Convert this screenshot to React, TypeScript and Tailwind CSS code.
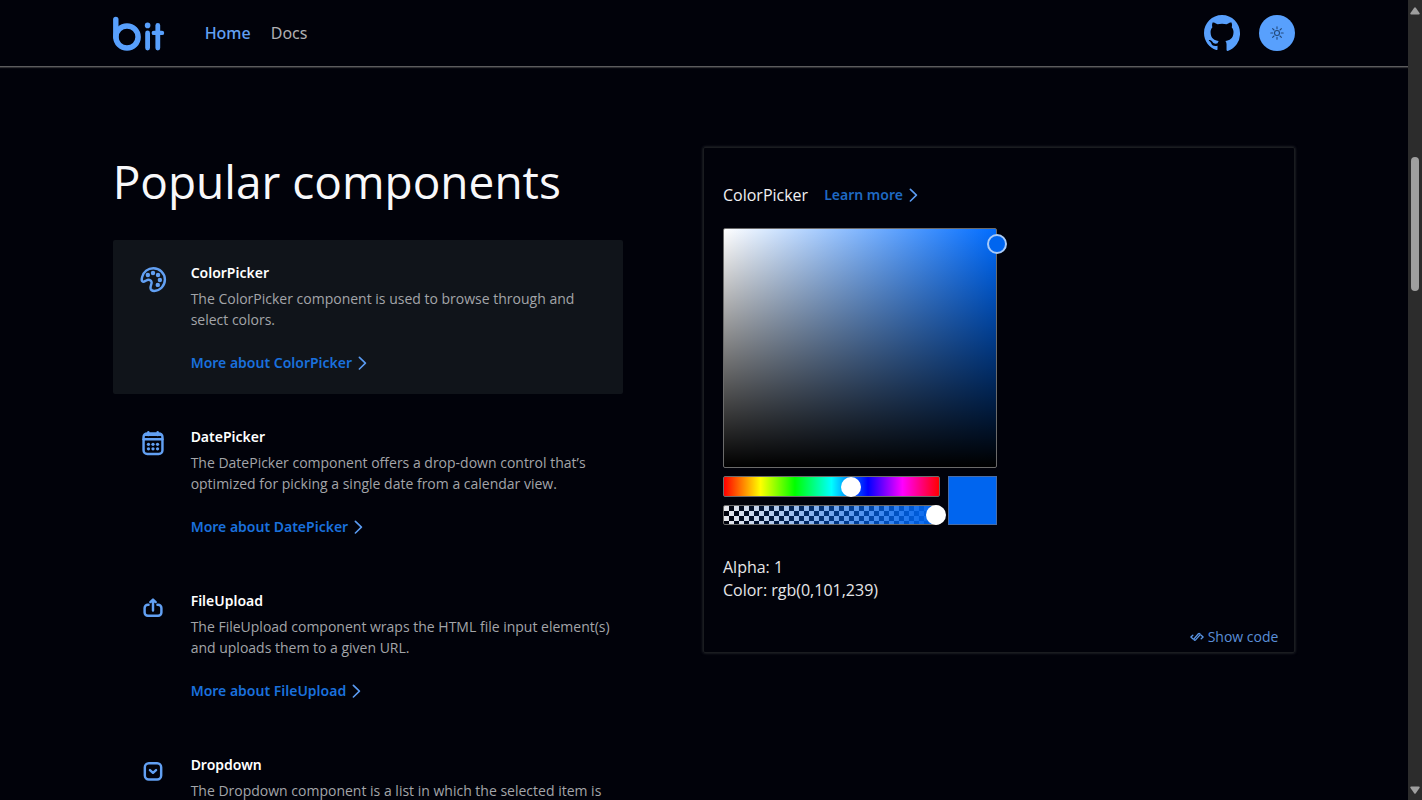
import React, { useState } from "react";

function Logo() {
  return (
    <svg viewBox="0 0 52 36" className="h-9 w-[52px]" fill="none" stroke="#58a0fd" strokeLinecap="round" aria-hidden="true">
      <path d="M2.8 4.4V22" strokeWidth="5.4" />
      <circle cx="14" cy="22" r="11.1" strokeWidth="5.5" />
      <circle cx="34.6" cy="10.4" r="2.8" fill="#58a0fd" stroke="none" />
      <path d="M34.6 18V33" strokeWidth="4.8" />
      <path d="M44.8 10.4V33" strokeWidth="4.8" />
      <path d="M40.8 17.9H49" strokeWidth="4.4" />
    </svg>
  );
}

function GithubIcon() {
  return (
    <svg viewBox="0 0 16 16" className="size-9" fill="#58a0fd" aria-hidden="true">
      <path d="M8 0C3.58 0 0 3.58 0 8c0 3.54 2.29 6.53 5.47 7.59.4.07.55-.17.55-.38 0-.19-.01-.82-.01-1.49-2.01.37-2.53-.49-2.69-.94-.09-.23-.48-.94-.82-1.13-.28-.15-.68-.52-.01-.53.63-.01 1.08.58 1.23.82.72 1.21 1.87.87 2.33.66.07-.52.28-.87.51-1.07-1.78-.2-3.64-.89-3.64-3.95 0-.87.31-1.59.82-2.15-.08-.2-.36-1.02.08-2.12 0 0 .67-.21 2.2.82.64-.18 1.32-.27 2-.27s1.36.09 2 .27c1.53-1.04 2.2-.82 2.2-.82.44 1.1.16 1.92.08 2.12.51.56.82 1.27.82 2.15 0 3.07-1.87 3.75-3.65 3.95.29.25.54.73.54 1.48v2.58c0 .21.15.46.55.38A8.01 8.01 0 0 0 16 8c0-4.42-3.58-8-8-8Z" />
    </svg>
  );
}

function SunIcon() {
  return (
    <svg viewBox="0 0 14 14" className="size-[14px]" fill="none" stroke="#23497a" strokeWidth="1.1" strokeLinecap="round" aria-hidden="true">
      <circle cx="7" cy="7" r="2.5" />
      <path d="M7 .8v2M7 11.2v2M.8 7h2M11.2 7h2M2.6 2.6 4 4M10 10l1.4 1.4M2.6 11.4 4 10M10 4l1.4-1.4" />
    </svg>
  );
}

function Chevron() {
  return (
    <svg viewBox="0 0 9 14" className="h-[14px] w-[9px]" fill="none" stroke="#5a9bf2" strokeWidth="1.6" strokeLinecap="round" strokeLinejoin="round" aria-hidden="true">
      <path d="M1.4 1.4 7.4 7.2l-6 5.8" />
    </svg>
  );
}

const iconProps = {
  viewBox: "0 0 24 24",
  className: "mt-[5px] size-7 shrink-0",
  fill: "none",
  stroke: "#62a0f3",
  strokeWidth: 2.1,
  strokeLinecap: "round",
  strokeLinejoin: "round",
  "aria-hidden": true,
} as const;

function PaletteIcon() {
  return (
    <svg {...iconProps}>
      <path d="M13 21.4c5.2-.2 9.2-4.4 9.2-9.8S17.8 2 12.3 2C7.600 2 3.900 5.200 2.700 9.400c-.5 1.700-.7 3.100.2 3.800 1 .8 2-.1 3.300-.8 1.900-1 4.400-.6 4.600 1.400.2 1.700-1.200 3.200-.9 5.200.3 1.600 1.500 2.400 3.100 2.400Z" />
      <g fill="#62a0f3" stroke="none">
        <circle cx="7.6" cy="7.7" r="1.9" />
        <circle cx="12" cy="6" r="1.9" />
        <circle cx="16.3" cy="7.7" r="1.9" />
        <circle cx="17.9" cy="12" r="1.9" />
        <circle cx="16.1" cy="16.2" r="1.9" />
      </g>
    </svg>
  );
}

function CalendarIcon() {
  return (
    <svg {...iconProps}>
      <rect x="3.9" y="2.9" width="16.2" height="17.7" rx="3.2" />
      <path d="M4 8h16" />
      <path d="M5.5 4h13M8 1.9v2.3M16 1.9v2.3" />
      <g fill="#62a0f3" stroke="none">
        <circle cx="8.1" cy="12.3" r="1.4" />
        <circle cx="12" cy="12.3" r="1.4" />
        <circle cx="15.9" cy="12.3" r="1.4" />
        <circle cx="8.1" cy="16.1" r="1.4" />
        <circle cx="12" cy="16.1" r="1.4" />
        <circle cx="15.9" cy="16.1" r="1.4" />
      </g>
    </svg>
  );
}

function UploadIcon() {
  return (
    <svg {...iconProps}>
      <path d="M8.2 9.2h-.6A2.8 2.8 0 0 0 4.8 12v3.9a2.8 2.8 0 0 0 2.8 2.8h8.8a2.8 2.8 0 0 0 2.8-2.8V12a2.8 2.8 0 0 0-2.8-2.8h-.6" />
      <path d="M12 14.1V5M9.7 6.9 12 4.8 14.3 6.9" />
    </svg>
  );
}

function DropdownIcon() {
  return (
    <svg {...iconProps}>
      <rect x="5" y="4.5" width="14" height="14" rx="3.4" />
      <path d="M9.4 10.4 12 12.7 14.6 10.4" />
    </svg>
  );
}

function CodeIcon() {
  return (
    <svg viewBox="0 0 14 10" className="h-[10px] w-[14px]" fill="none" stroke="#5b97e8" strokeWidth="1.3" strokeLinecap="round" strokeLinejoin="round" aria-hidden="true">
      <path d="M2.8 3.2.9 5l1.9 1.8M11.2 3.2 13.1 5l-1.9 1.8M8.400 1.800 4.200 6.600c-.8 1.100.5 2.200 1.400 1.300l4.200-4.800c.8-1.100-.5-2.200-1.400-1.300Z" />
    </svg>
  );
}

const items = [
  {
    name: "ColorPicker",
    icon: <PaletteIcon />,
    text: "The ColorPicker component is used to browse through and select colors.",
  },
  {
    name: "DatePicker",
    icon: <CalendarIcon />,
    text: "The DatePicker component offers a drop-down control that’s optimized for picking a single date from a calendar view.",
  },
  {
    name: "FileUpload",
    icon: <UploadIcon />,
    text: "The FileUpload component wraps the HTML file input element(s) and uploads them to a given URL.",
  },
  {
    name: "Dropdown",
    icon: <DropdownIcon />,
    text: "The Dropdown component is a list in which the selected item is",
  },
];

const slider =
  "block h-full w-[calc(100%+15px)] -ml-2 cursor-pointer appearance-none bg-transparent outline-none [&::-webkit-slider-thumb]:size-5 [&::-webkit-slider-thumb]:appearance-none [&::-webkit-slider-thumb]:rounded-full [&::-webkit-slider-thumb]:bg-white";

function ColorPicker() {
  const [hue, setHue] = useState(215);
  const [alpha, setAlpha] = useState(1);
  return (
    <>
      <div className="w-[274px]">
        <div className="relative h-60 rounded-xs border border-[#6b6b6b] bg-[linear-gradient(to_top,#000,transparent),linear-gradient(to_right,#fff,#006cff)]">
          <span className="absolute top-[5px] -right-[11px] size-5 rounded-full border-2 border-[#a9cbf8] bg-[#0065ef]" />
        </div>
        <div className="mt-2 flex gap-2">
          <div className="flex flex-1 flex-col gap-2">
            <div className="h-[21px] rounded-xs border border-[#6b6b6b] bg-[linear-gradient(to_right,#f00,#ff0_17%,#0f0_33%,#0ff_50%,#00f_67%,#f0f_83%,#f00)]">
              <input
                type="range"
                aria-label="Hue"
                min={0}
                max={360}
                value={hue}
                onChange={(e) => setHue(Number(e.target.value))}
                className={slider}
              />
            </div>
            <div className="h-5 rounded-xs border border-[#6b6b6b] bg-[linear-gradient(to_right,transparent,#0065ef),repeating-conic-gradient(#01020a_0_25%,#e8e8ec_0_50%)] bg-[length:100%_100%,10px_10px]">
              <input
                type="range"
                aria-label="Alpha"
                min={0}
                max={1}
                step={0.01}
                value={alpha}
                onChange={(e) => setAlpha(Number(e.target.value))}
                className={slider}
              />
            </div>
          </div>
          <div className="size-[49px] border border-[#4a6da6] bg-[#0065ef]" />
        </div>
      </div>
      <div className="mt-[31px] text-base leading-[23px] text-[#e6e6e8]">
        <p>Alpha: {alpha}</p>
        <p>Color: rgb(0,101,239)</p>
      </div>
    </>
  );
}

function ScrollBar() {
  return (
    <div className="flex w-[14px] shrink-0 flex-col items-center bg-[#2c2c2c]" aria-hidden="true">
      <svg viewBox="0 0 10 8" className="mt-[7px] h-2 w-[10px]" fill="#9f9f9f">
        <path d="M4.2.8a1 1 0 0 1 1.6 0L9.5 6a1 1 0 0 1-.8 1.5H1.3A1 1 0 0 1 .5 6Z" />
      </svg>
      <div className="mt-[142px] h-[134px] w-2 rounded-full bg-[#9f9f9f]" />
      <svg viewBox="0 0 10 8" className="mt-auto mb-[6px] h-2 w-[10px]" fill="#9f9f9f">
        <path d="M4.2 7.2a1 1 0 0 0 1.6 0L9.5 2A1 1 0 0 0 8.7.5H1.3A1 1 0 0 0 .5 2Z" />
      </svg>
    </div>
  );
}

export default function App() {
  return (
    <div className="flex h-screen overflow-hidden bg-[#01020a] font-['Open_Sans','Noto_Sans',sans-serif]">
      <div className="flex min-w-0 flex-1 flex-col">
        <header className="flex h-[67px] shrink-0 items-center border-b border-[#5c5c5e] px-[8%] shadow-[0_1px_1px_#2c2c30]">
          <a href="#" aria-label="bit">
            <Logo />
          </a>
          <nav className="ml-10 flex flex-1 gap-5 font-['Noto_Sans','Open_Sans',sans-serif] text-base">
            <a href="#" className="font-medium text-[#62a0f3]">Home</a>
            <a href="#" className="text-[#b0b0b2]">Docs</a>
          </nav>
          <div className="flex items-center gap-[19px]">
            <a href="#" aria-label="GitHub">
              <GithubIcon />
            </a>
            <button type="button" aria-label="Toggle theme" className="flex size-9 items-center justify-center rounded-full bg-[#58a0fd]">
              <SunIcon />
            </button>
          </div>
        </header>

        <main className="grid min-h-0 flex-1 grid-cols-[510fr_592fr] items-start gap-20 px-[8%] pt-20">
          <section>
            <h1 className="mb-6 text-[46px] leading-[69px] whitespace-nowrap text-[#f8f8fa]">Popular components</h1>
            <ul className="flex flex-col gap-[10px]">
              {items.map((item, i) => (
                <li
                  key={item.name}
                  className={
                    i === 0
                      ? "flex gap-6 rounded-xs bg-[#10141a] pt-[21px] pr-2 pb-[19px] pl-[26px]"
                      : "flex gap-6 rounded-xs pt-[21px] pr-2 pb-[19px] pl-[26px]"
                  }
                >
                  {item.icon}
                  <div>
                    <h2 className="font-['Noto_Sans','Open_Sans',sans-serif] text-sm leading-6 font-semibold text-white">{item.name}</h2>
                    <p className="mt-[3px] text-sm leading-[21px] text-[#a3a5a9]">{item.text}</p>
                    <a
                      href="#"
                      className="mt-[21px] flex items-center gap-[6px] font-['Noto_Sans','Open_Sans',sans-serif] text-sm leading-6 font-semibold text-[#1a70dc]"
                    >
                      More about {item.name}
                      <Chevron />
                    </a>
                  </div>
                </li>
              ))}
            </ul>
          </section>

          <section className="rounded-xs border border-[#1a1c20] px-[19px] pt-[35px] pb-[5px] shadow-[0_0_3px_#34363a]">
            <div className="mb-[21px] flex items-center gap-4">
              <h2 className="text-base leading-6 text-[#f0f0f2]">ColorPicker</h2>
              <a
                href="#"
                className="flex items-center gap-[6px] font-['Noto_Sans','Open_Sans',sans-serif] text-sm leading-6 font-semibold text-[#1f69c2]"
              >
                Learn more
                <Chevron />
              </a>
            </div>
            <ColorPicker />
            <div className="-mr-[3px] mt-[25px] flex justify-end">
              <button type="button" className="flex items-center gap-1 text-sm leading-5 text-[#5b8fd8]">
                <CodeIcon />
                Show code
              </button>
            </div>
          </section>
        </main>
      </div>
      <ScrollBar />
    </div>
  );
}
